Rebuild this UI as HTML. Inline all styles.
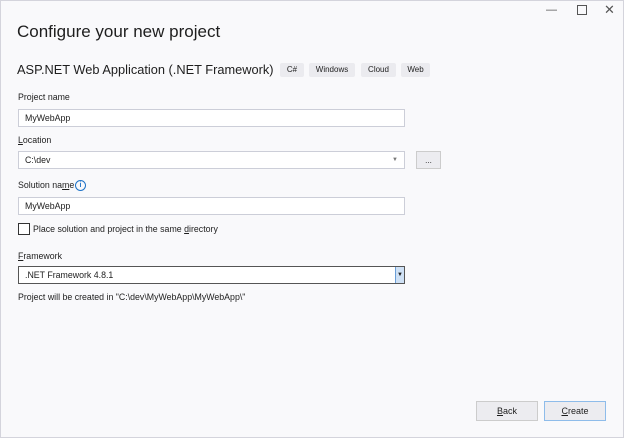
<!DOCTYPE html>
<html><head><style>
body{margin:0;width:624px;height:438px;background:#f9f9fb;font-family:"Liberation Sans",sans-serif;color:#1e1e1e;position:relative;overflow:hidden}
.win{position:absolute;left:0;top:0;width:622px;height:436px;border:1px solid #d4d4dc}
.a{position:absolute;white-space:nowrap}
.lbl{font-size:8.8px}
.inp{position:absolute;left:18px;width:379px;height:16px;background:#fff;border:1px solid #ccced8;font-size:8.8px;line-height:16px;padding-left:6px;box-sizing:content-box}
.tag{position:absolute;top:63px;height:14px;background:#ebebef;font-size:8px;line-height:14px;text-align:center;border-radius:2px}
.btn{position:absolute;top:401px;height:18px;width:60px;background:#ececf0;border:1px solid #cccccc;font-size:9px;line-height:18px;text-align:center}
</style></head><body>
<div class="win"></div>
<div class="a" style="left:546px;top:4px;font-size:11px;color:#555">—</div>
<div class="a" style="left:577px;top:5px;width:8px;height:8px;border:1px solid #555"></div>
<div class="a" style="left:604px;top:2px;font-size:13px;color:#555">✕</div>
<div class="a" style="left:17px;top:22px;font-size:17px">Configure your new project</div>
<div class="a" style="left:17px;top:62px;font-size:12.8px">ASP.NET Web Application (.NET Framework)</div>
<div class="tag" style="left:280px;width:24px">C#</div>
<div class="tag" style="left:309px;width:46px">Windows</div>
<div class="tag" style="left:361px;width:35px">Cloud</div>
<div class="tag" style="left:401px;width:29px">Web</div>
<div class="a lbl" style="left:18px;top:92px">Project name</div>
<div class="inp" style="top:109px">MyWebApp</div>
<div class="a lbl" style="left:18px;top:135px"><u>L</u>ocation</div>
<div class="inp" style="top:151px">C:\dev<span style="position:absolute;right:6px;font-size:6px;color:#777">▼</span></div>
<div class="a" style="left:416px;top:151px;width:23px;height:16px;background:#ececf0;border:1px solid #ccc;font-size:8px;text-align:center;line-height:18px">...</div>
<div class="a lbl" style="left:18px;top:180px">Solution na<u>m</u>e</div>
<div class="a" style="left:75px;top:180px;width:9px;height:9px;border:1px solid #1e73c8;border-radius:50%;font-size:7px;color:#1e73c8;text-align:center;line-height:9px;font-weight:bold">i</div>
<div class="inp" style="top:197px">MyWebApp</div>
<div class="a" style="left:18px;top:223px;width:10px;height:10px;border:1px solid #333;background:#fff"></div>
<div class="a lbl" style="left:33px;top:224px">Place solution and project in the same <u>d</u>irectory</div>
<div class="a lbl" style="left:18px;top:251px"><u>F</u>ramework</div>
<div class="inp" style="top:266px;border-color:#555">.NET Framework 4.8.1<span style="position:absolute;right:0;top:0;width:8px;height:16px;background:#cfe1f5;border-left:1px solid #6a9fd8;font-size:6px;line-height:16px;text-align:center">▼</span></div>
<div class="a lbl" style="left:18px;top:292px">Project will be created in "C:\dev\MyWebApp\MyWebApp\"</div>
<div class="btn" style="left:476px"><u>B</u>ack</div>
<div class="btn" style="left:544px;border-color:#8ebcea"><u>C</u>reate</div>
</body></html>
